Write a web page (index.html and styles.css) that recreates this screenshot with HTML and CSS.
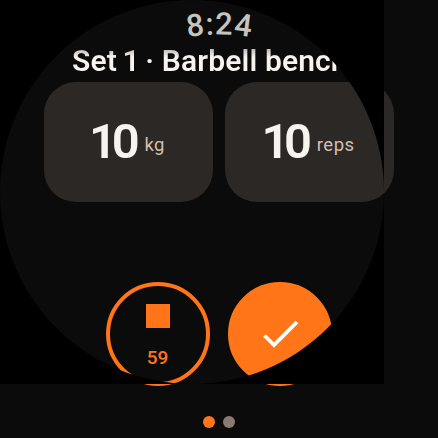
FILE: index.html
```
<!DOCTYPE html>
<html lang="en">
<head>
<meta charset="utf-8">
<title>Workout set</title>
<link rel="stylesheet" href="styles.css">
</head>
<body>
<main class="watch">
  <svg class="time" viewBox="0 0 438 44" aria-label="8:24">
    <path id="arc" d="M34.5 219 A184.5 184.5 0 0 1 403.5 219" fill="none"/>
    <text><textPath href="#arc" startOffset="50.1%" text-anchor="middle">8:24</textPath></text>
  </svg>
  <h1 class="title"><span class="set">Set 1 ·</span> Barbell bench</h1>
  <section class="cards">
    <div class="card"><span class="value">10</span><span class="unit">kg</span></div>
    <div class="card"><span class="value">10</span><span class="unit">reps</span></div>
  </section>
  <section class="actions">
    <button class="action rest"><span class="stop"></span><span class="count">59</span></button>
    <button class="action done" aria-label="Done">
      <svg class="check" viewBox="0 0 48 48"><path d="M8.5 25.5 L18 35 L41 12" fill="none" stroke="#fff" stroke-width="3.8"/></svg>
    </button>
  </section>
  <nav class="pages"><span class="dot active"></span><span class="dot"></span></nav>
  <svg class="bezel" viewBox="0 0 384 384"><path fill="#000" fill-rule="evenodd" d="M0 0H384V384H0Z M192 0A192 192 0 0 0 192 384A192 192 0 0 0 192 0Z"/></svg>
</main>
</body>
</html>
```
FILE: styles.css
```
body {
  margin: 0;
  background: #0b0b0b;
  font-family: Roboto, "Liberation Sans", sans-serif;
}

.watch {
  position: relative;
  display: flex;
  flex-direction: column;
  align-items: center;
  width: 438px;
  height: 438px;
  overflow: hidden;
  background: #0b0b0b;
}

.time {
  display: block;
  flex: none;
  width: 438px;
  height: 44px;
  overflow: visible;
  fill: #c6c4be;
  font-size: 31px;
  font-weight: 500;
  letter-spacing: 0.8px;
}

.title {
  flex: none;
  align-self: stretch;
  margin: 0;
  padding-left: 72px;
  height: 38px;
  line-height: 34px;
  font-size: 30px;
  font-weight: 560;
  letter-spacing: 0.13px;
  white-space: nowrap;
  color: transparent;
  background: linear-gradient(#b5b2b0 4px, #f7f3ef 13px) text;
}

.set {
  word-spacing: -2px;
}

.cards {
  display: flex;
  flex: none;
  gap: 12px;
}

.card {
  display: flex;
  align-items: center;
  justify-content: center;
  gap: 10px;
  box-sizing: border-box;
  width: 169px;
  height: 120px;
  padding-right: 3px;
  border-radius: 32px;
  background: #2c2826;
}

.value {
  line-height: 120px;
  font-size: 49px;
  font-weight: 600;
  letter-spacing: -5.3px;
  color: #f7f3ef;
}

.unit {
  padding-top: 6px;
  font-size: 18.5px;
  line-height: 24px;
  letter-spacing: 0.5px;
  color: #d3bfb3;
}

.actions {
  display: flex;
  flex: none;
  gap: 18px;
  margin-top: 80px;
}

.action {
  display: flex;
  flex-direction: column;
  align-items: center;
  box-sizing: border-box;
  width: 104px;
  height: 104px;
  padding: 0;
  border: 4px solid #ff7518;
  border-radius: 50%;
  background: none;
  font: 500 19px/24px Roboto, sans-serif;
  color: #ff7518;
}

.rest {
  justify-content: flex-start;
  padding-top: 18px;
}

.stop {
  width: 24px;
  height: 24px;
  background: #ff7518;
}

.count {
  margin-top: 18px;
  padding-right: 1px;
}

.done {
  justify-content: center;
  background: #ff7518;
}

.check {
  width: 48px;
  height: 48px;
}

.pages {
  display: flex;
  flex: none;
  gap: 8px;
  margin-top: 30px;
}

.dot {
  width: 12px;
  height: 12px;
  border-radius: 50%;
  background: #8c7a72;
}

.active {
  background: #ff7518;
}

.bezel {
  position: absolute;
  top: 0;
  left: 0;
  width: 384px;
  height: 384px;
}
```
